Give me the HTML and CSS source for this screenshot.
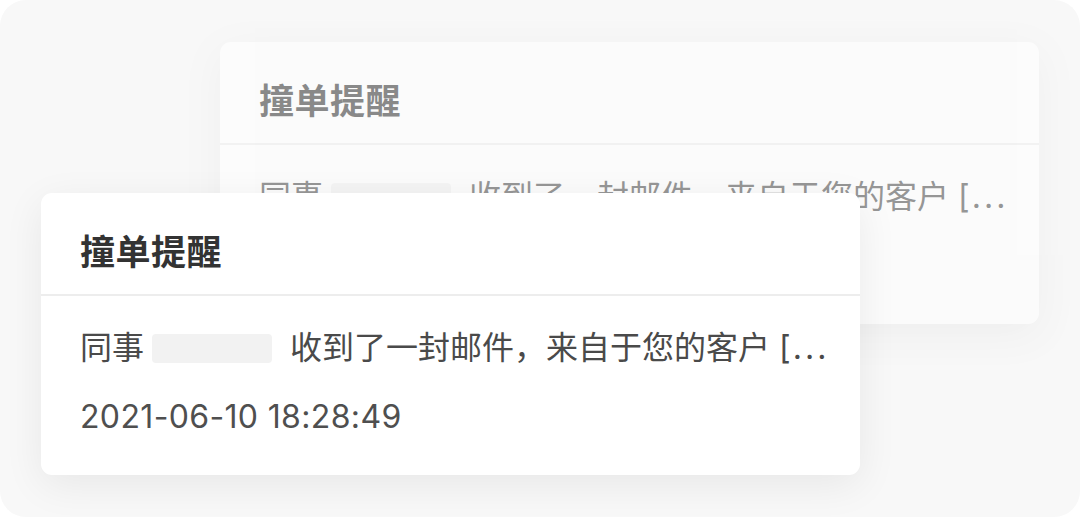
FILE: index.html
```html
<!DOCTYPE html>
<html lang="zh-CN">
<head>
<meta charset="utf-8">
<title>撞单提醒</title>
<link rel="stylesheet" href="styles.css">
</head>
<body>
<div class="panel">
  <div class="card card-back">
    <div class="card-head"><span class="card-title">撞单提醒</span></div>
    <div class="card-body">
      <div class="msg">同事<span class="blank"></span>收到了一封邮件，来自于您的客户 [<span class="dots">...</span></div>
      <div class="time">2021-06-10 18:28:49</div>
    </div>
  </div>
  <div class="card card-front">
    <div class="card-head"><span class="card-title">撞单提醒</span></div>
    <div class="card-body">
      <div class="msg">同事<span class="blank"></span>收到了一封邮件，来自于您的客户 [<span class="dots">...</span></div>
      <div class="time">2021-06-10 18:28:49</div>
    </div>
  </div>
</div>
</body>
</html>
```

FILE: styles.css
```css
html, body {
  margin: 0;
  padding: 0;
  background: #ffffff;
}

body {
  font-family: Inter, "Noto Sans CJK SC", "Noto Sans", sans-serif;
}

.panel {
  width: 1080px;
  height: 517px;
  background: #f8f8f8;
  border-radius: 26px;
  display: grid;
  grid-template-columns: 1fr;
  grid-template-rows: 1fr;
  overflow: hidden;
}

.card {
  grid-area: 1 / 1;
  align-self: start;
  justify-self: start;
  width: 819px;
  height: 282px;
  box-sizing: border-box;
  background: #ffffff;
  border-radius: 11px;
  box-shadow: 0 10px 40px rgba(0, 0, 0, 0.07);
  display: flex;
  flex-direction: column;
}

.card-back {
  margin-left: 220px;
  margin-top: 42px;
  opacity: 0.56;
  z-index: 0;
}

.card-front {
  margin-left: 41px;
  margin-top: 193px;
  z-index: 1;
}

.card-head {
  height: 103px;
  flex: none;
  box-sizing: border-box;
  padding: 12px 39px 0;
  display: flex;
  align-items: center;
  border-bottom: 2px solid #ededed;
}

.card-title {
  font-family: "Noto Sans CJK SC", sans-serif;
  font-size: 35px;
  font-weight: 600;
  color: #333333;
  letter-spacing: 0.5px;
}

.card-body {
  padding: 32px 39px 0;
  color: #4a4a4a;
  font-size: 32px;
}

.msg {
  height: 40px;
  line-height: 40px;
  white-space: nowrap;
  display: flex;
  align-items: center;
}

.blank {
  flex: none;
  display: inline-block;
  width: 120px;
  height: 29px;
  border-radius: 4px;
  background: #f2f2f2;
  margin: 0 18px 0 8px;
}

.dots {
  letter-spacing: 3px;
  margin-left: 2px;
}

.time {
  margin-top: 29px;
  height: 40px;
  line-height: 40px;
  color: #4f4f4f;
  letter-spacing: 0.35px;
  white-space: nowrap;
}
```
